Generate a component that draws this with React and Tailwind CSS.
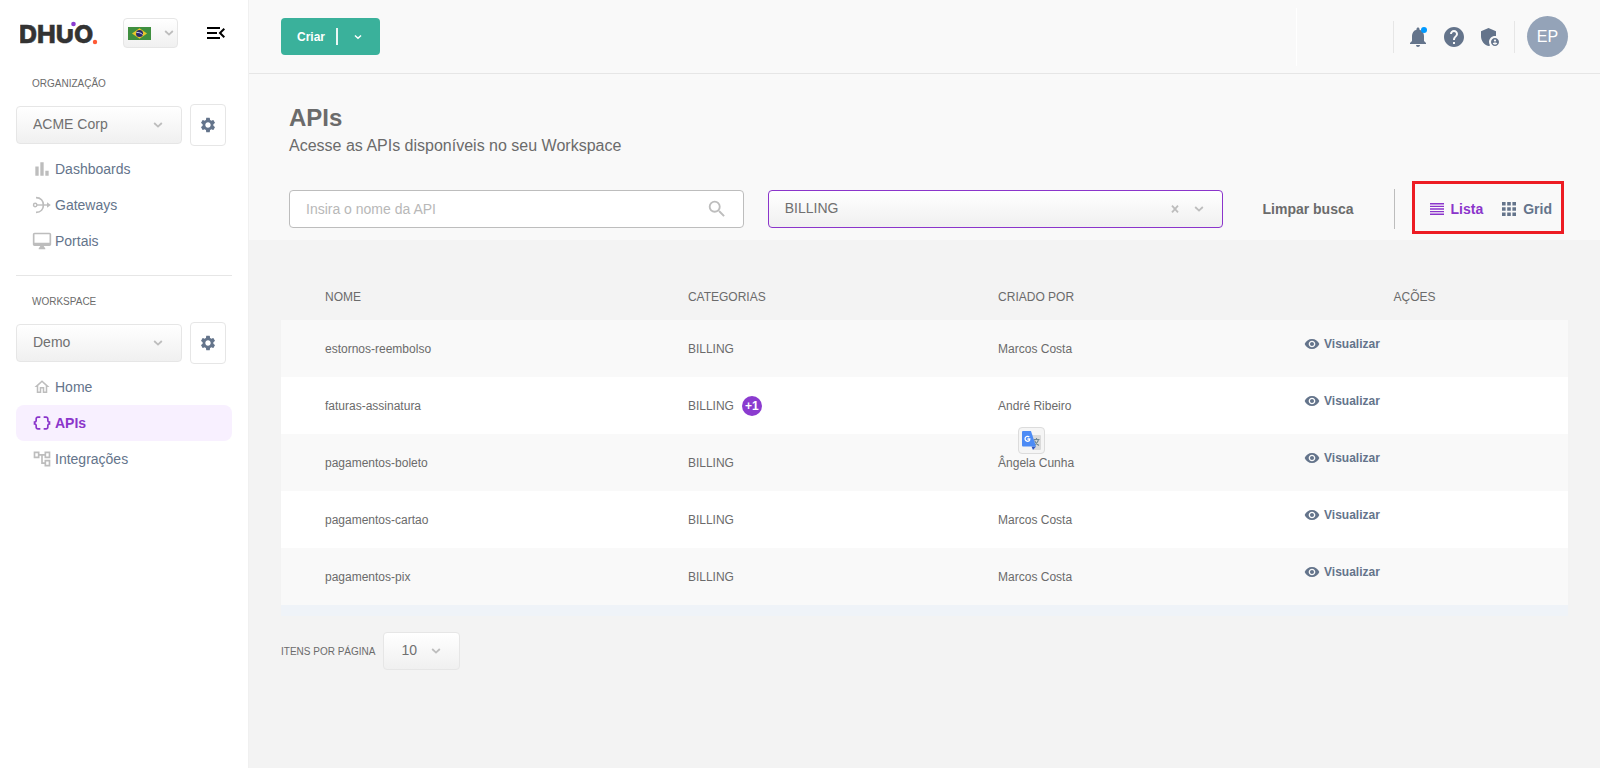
import React, { useState } from 'react';
import {
  MdAdminPanelSettings,
  MdHelp,
  MdMenuOpen,
  MdNotifications,
  MdSearch,
  MdSettings,
} from 'react-icons/md';

const apis = [
  { id: 1, name: 'estornos-reembolso', category: 'BILLING', extra: 0, owner: 'Marcos Costa' },
  { id: 2, name: 'faturas-assinatura', category: 'BILLING', extra: 1, owner: 'André Ribeiro' },
  { id: 3, name: 'pagamentos-boleto', category: 'BILLING', extra: 0, owner: 'Ângela Cunha' },
  { id: 4, name: 'pagamentos-cartao', category: 'BILLING', extra: 0, owner: 'Marcos Costa' },
  { id: 5, name: 'pagamentos-pix', category: 'BILLING', extra: 0, owner: 'Marcos Costa' },
];

const Icon = ({ d, className }) => (
  <svg className={className} viewBox="0 0 24 24" fill="currentColor" aria-hidden="true">
    <path d={d} />
  </svg>
);

const Chevron = ({ className }) => (
  <svg className={className} width="10" height="6" viewBox="0 0 10 6" fill="none" aria-hidden="true">
    <path d="M1.2 1l3.8 3.6L8.8 1" stroke="currentColor" strokeWidth="1.8" />
  </svg>
);

const paths = {
  chart: 'M4 9h4v11H4zM16 14h4v6h-4zM10 4h4v16h-4z',
  desktop:
    'M21 2H3c-1.1 0-2 .9-2 2v12c0 1.1.9 2 2 2h7l-2 3v1h8v-1l-2-3h7c1.1 0 2-.9 2-2V4c0-1.1-.9-2-2-2zm0 12H3V4h18v10z',
  home: 'M12 5.69l5 4.5V18h-2v-6H9v6H7v-7.81l5-4.5M12 3L2 12h3v8h6v-6h2v6h6v-8h3L12 3z',
  braces:
    'M4 7v2c0 .55-.45 1-1 1H2v4h1c.55 0 1 .45 1 1v2c0 1.65 1.35 3 3 3h3v-2H7c-.55 0-1-.45-1-1v-2c0-1.3-.84-2.42-2-2.83v-.34C5.16 11.42 6 10.3 6 9V7c0-.55.45-1 1-1h3V4H7C5.35 4 4 5.35 4 7zM21 10c-.55 0-1-.45-1-1V7c0-1.65-1.35-3-3-3h-3v2h3c.55 0 1 .45 1 1v2c0 1.3.84 2.42 2 2.83v.34c-1.16.41-2 1.52-2 2.83v2c0 .55-.45 1-1 1h-3v2h3c1.65 0 3-1.35 3-3v-2c0-.55.45-1 1-1h1v-4h-1z',
  tree: 'M22 11V3h-7v3H9V3H2v8h7V8h2v10h4v3h7v-8h-7v3h-2V8h2v3h7zM7 9H4V5h3v4zm10 6h3v4h-3v-4zm0-10h3v4h-3V5z',
  eye: 'M12 4.5C7 4.5 2.73 7.61 1 12c1.73 4.39 6 7.5 11 7.5s9.27-3.11 11-7.5c-1.73-4.39-6-7.5-11-7.5zm0 12.5c-2.76 0-5-2.24-5-5s2.24-5 5-5 5 2.24 5 5-2.24 5-5 5zm0-8c-1.66 0-3 1.34-3 3s1.34 3 3 3 3-1.34 3-3-1.34-3-3-3z',
};

const GatewayIcon = () => (
  <svg className="w-5 h-5" viewBox="0 0 20 20" fill="none" stroke="currentColor" aria-hidden="true">
    <circle cx="3.2" cy="10" r="1.7" strokeWidth="1.4" />
    <path d="M5 10h12" strokeWidth="1.4" />
    <path d="M4 2.600c4.800 0 7.400 3.300 7.400 7.400s-2.600 7.400-7.400 7.400" strokeWidth="1.7" />
    <path d="M15 7.200l3.800 2.800-3.800 2.800z" fill="currentColor" stroke="none" />
  </svg>
);

const Logo = () => (
  <svg width="80" height="34" viewBox="0 0 80 34" role="img" aria-label="DHUO">
    <text
      x="-1"
      y="27"
      fill="#333333"
      stroke="#333333"
      strokeWidth="0.5"
      fontFamily="Inter, sans-serif"
      fontWeight="800"
      fontSize="25"
    >
      DHUO
    </text>
    <rect x="47" y="5" width="8" height="8" fill="#ffffff" />
    <circle cx="53.500" cy="8" r="2.300" fill="#8b3bcf" />
    <circle cx="75" cy="26" r="2.200" fill="#ff5a36" />
  </svg>
);

const Flag = () => (
  <svg width="23" height="13" viewBox="0 0 23 13" aria-hidden="true">
    <rect width="23" height="13" fill="#3f8f3f" />
    <path d="M4 6.5L11.5 1.3 19 6.5l-7.5 5.2z" fill="#e8c62c" />
    <circle cx="11.5" cy="6.5" r="3.5" fill="#2b2a6b" />
    <path d="M8.4 5.6c2.2-.4 4.6.3 6.2 2" stroke="#c9d3e6" strokeWidth="1" fill="none" />
  </svg>
);

const ScopePicker = ({ id, label, value }) => (
  <div>
    <label htmlFor={id} className="block px-4 text-[10px] leading-4 text-[#6b6b6b] uppercase">
      {label}
    </label>
    <div className="mt-3 flex items-center gap-2">
      <div className="relative w-[166px]">
        <select
          id={id}
          className="w-full h-[38px] pl-4 pr-8 pb-0.5 appearance-none rounded border border-[#e6e6e6] bg-linear-to-b from-white to-[#f0f0f0] text-sm text-[#707070]"
        >
          <option>{value}</option>
        </select>
        <Chevron className="absolute right-[19px] top-4 text-[#bdbdbd] pointer-events-none" />
      </div>
      <button
        aria-label={`Configurar ${value}`}
        className="w-9 h-[42px] flex items-center justify-center rounded border border-[#e6e6e6] bg-white text-[#64748b]"
      >
        <MdSettings size={18} />
      </button>
    </div>
  </div>
);

const NavItem = ({ icon, label, active }) => (
  <li>
    <a
      href="#"
      className={
        active
          ? 'h-9 px-4 flex items-center gap-[3px] rounded-lg bg-[#f8f0ff] text-sm font-bold text-[#8b35cb]'
          : 'h-9 px-4 flex items-center gap-[3px] rounded-lg text-sm text-[#64748b]'
      }
    >
      <span className={active ? 'w-5 flex justify-center' : 'w-5 flex justify-center text-[#bdbdbd]'}>
        {icon}
      </span>
      {label}
    </a>
  </li>
);

const Sidebar = () => (
  <aside className="w-[248px] shrink-0 px-4 bg-white">
    <div className="h-[66px] pl-1 pr-1 flex items-center">
      <Logo />
      <button
        aria-label="Idioma: Português (Brasil)"
        className="ml-[23px] w-[55px] h-[30px] pl-1 pr-[3px] flex items-center justify-between rounded border border-[#e6e6e6] bg-linear-to-b from-white to-[#f0f0f0] text-[#bdbdbd]"
      >
        <Flag />
        <Chevron />
      </button>
      <button aria-label="Recolher menu" className="ml-auto text-black">
        <MdMenuOpen size={24} />
      </button>
    </div>

    <div className="pt-2.5">
      <ScopePicker id="organizacao" label="Organização" value="ACME Corp" />
    </div>
    <ul className="mt-[5px]">
      <NavItem icon={<Icon d={paths.chart} className="w-5 h-5" />} label="Dashboards" />
      <NavItem icon={<GatewayIcon />} label="Gateways" />
      <NavItem icon={<Icon d={paths.desktop} className="w-5 h-5" />} label="Portais" />
    </ul>

    <hr className="mt-4 mb-[18px] border-[#e6e6e6]" />

    <ScopePicker id="workspace" label="Workspace" value="Demo" />
    <ul className="mt-[5px]">
      <NavItem icon={<Icon d={paths.home} className="w-[18px] h-[18px]" />} label="Home" />
      <NavItem icon={<Icon d={paths.braces} className="w-5 h-5" />} label="APIs" active />
      <NavItem icon={<Icon d={paths.tree} className="w-5 h-5" />} label="Integrações" />
    </ul>
  </aside>
);

const Topbar = () => (
  <header className="h-[74px] px-8 flex items-center justify-between border-b border-[#e6e6e6] bg-[#f9f9f9]">
    <button className="h-[37px] px-4 flex items-center rounded bg-[#3ab19b] text-xs font-bold text-white">
      Criar
      <span className="ml-[11px] w-0.5 h-[17px] bg-white/90" />
      <Chevron className="ml-4 mr-0.5 w-2" />
    </button>

    <div className="flex items-center text-[#64748b]">
      <span className="w-px h-[58px] mr-24 bg-white" />
      <div className="h-8 px-3 flex items-center gap-3 border-x border-[#e6e6e6]">
        <button aria-label="Notificações" className="relative">
          <MdNotifications size={24} />
          <span className="absolute top-0.5 right-[3px] w-1.5 h-1.5 rounded-full bg-[#0099ff]" />
        </button>
        <button aria-label="Ajuda">
          <MdHelp size={24} />
        </button>
        <button aria-label="Administração">
          <MdAdminPanelSettings size={24} />
        </button>
      </div>
      <button className="ml-3 w-[41px] h-[41px] rounded-full bg-[#94a3b8] text-base text-white">EP</button>
    </div>
  </header>
);

const Filters = ({ view, setView }) => {
  const [search, setSearch] = useState('');
  const [category, setCategory] = useState('BILLING');

  const clear = () => {
    setSearch('');
    setCategory('');
  };

  return (
    <section className="h-[166px] pl-10 pr-12 pt-7 bg-[#f9f9f9]">
      <h1 className="text-2xl leading-8 font-bold text-[#6b6b6b]">APIs</h1>
      <p className="text-base leading-6 text-[#6b6b6b]">Acesse as APIs disponíveis no seu Workspace</p>

      <div className="mt-[31px] flex items-center">
        {/* Search */}
        <div className="relative flex-1">
          <input
            type="text"
            aria-label="Nome da API"
            placeholder="Insira o nome da API"
            value={search}
            onChange={(e) => setSearch(e.target.value)}
            className="w-full h-[38px] pl-4 pr-12 rounded border border-[#bdbdbd] bg-white text-sm text-[#707070] placeholder:text-[#b8b8b8]"
          />
          <MdSearch size={22} className="absolute right-4 top-2 text-[#bdbdbd]" />
        </div>

        {/* Category */}
        <div className="relative flex-1 ml-6">
          <select
            aria-label="Categoria"
            value={category}
            onChange={(e) => setCategory(e.target.value)}
            className="w-full h-[38px] pl-4 pr-16 pb-0.5 appearance-none rounded border border-[#8b35cb] bg-linear-to-b from-white to-[#f0f0f0] text-sm text-[#707070]"
          >
            <option value="">Todas</option>
            <option value="BILLING">BILLING</option>
          </select>
          <button
            aria-label="Limpar categoria"
            onClick={() => setCategory('')}
            className="absolute right-11 top-[15px] text-[#bdbdbd]"
          >
            <svg width="8" height="8" viewBox="0 0 8 8" fill="none" stroke="currentColor" strokeWidth="1.8">
              <path d="M1 .6l6 6.8M7 .6L1 7.4" />
            </svg>
          </button>
          <Chevron className="absolute right-[19px] top-4 text-[#bdbdbd] pointer-events-none" />
        </div>

        <button onClick={clear} className="ml-10 text-sm font-bold text-[#6b6b6b]">
          Limpar busca
        </button>

        {/* View switch */}
        <div className="ml-10 h-10 pl-[35px] relative flex items-center border-l border-[#bdbdbd] text-sm font-bold">
          <button
            onClick={() => setView('lista')}
            className={view === 'lista' ? 'flex items-center gap-[7px] text-[#8b35cb]' : 'flex items-center gap-[7px] text-[#64748b]'}
          >
            <svg width="14" height="12" viewBox="0 0 14 12" fill="currentColor" aria-hidden="true">
              <path d="M0 0h14v1.400H0zM0 2.650h14v1.400H0zM0 5.300h14v1.400H0zM0 7.950h14v1.400H0zM0 10.600h14v1.400H0z" />
            </svg>
            Lista
          </button>
          <button
            onClick={() => setView('grid')}
            className={view === 'grid' ? 'ml-[19px] flex items-center gap-[7px] text-[#8b35cb]' : 'ml-[19px] flex items-center gap-[7px] text-[#64748b]'}
          >
            <svg width="14" height="14" viewBox="0 0 14 14" fill="currentColor" aria-hidden="true">
              <path d="M0 0h3.600v3.600H0zM5.200 0h3.600v3.600H5.200zM10.400 0H14v3.600h-3.600zM0 5.200h3.600v3.600H0zM5.200 5.200h3.600v3.600H5.200zM10.400 5.200H14v3.600h-3.600zM0 10.400h3.600V14H0zM5.200 10.400h3.600V14H5.200zM10.400 10.400H14V14h-3.600z" />
            </svg>
            Grid
          </button>
          <span className="absolute left-[17px] -right-3 -top-2 -bottom-[5px] border-3 border-[#ed1c24] pointer-events-none" />
        </div>
      </div>
    </section>
  );
};

const TranslateBadge = () => (
  <span className="absolute left-16 -top-[7px] w-[27px] h-[27px] flex items-center justify-center rounded border border-[#dcdcdc] bg-[#f5f5f5]">
    <svg width="19" height="19" viewBox="0 0 19 19" aria-hidden="true">
      <path d="M7 4h11a1 1 0 011 1v13a1 1 0 01-1 1h-6z" fill="#dadada" />
      <path
        d="M11.5 8.500h6M14.500 7v1.500M16.500 8.500c-.6 2.600-2 4.500-4.500 6M12.500 9.500c.8 2.200 2.200 3.800 4.500 5"
        stroke="#6f8791"
        strokeWidth="1.1"
        fill="none"
      />
      <path d="M9.500 15.500H14L11 19z" fill="#2f56c0" />
      <path d="M1 0h8l5 15.500H1a1 1 0 01-1-1V1a1 1 0 011-1z" fill="#4c8bf5" />
      <path d="M7.300 6A2.500 2.500 0 105.500 10.300c1.500 0 2.300-1 2.300-2.300H5.400" stroke="#ffffff" strokeWidth="1.300" fill="none" />
    </svg>
  </span>
);

const ApiTable = () => (
  <div className="border-b-[11px] border-[#eff3f8]">
    <table className="w-full table-fixed text-xs text-[#6b6b6b]">
      <thead>
        <tr className="h-12 text-left uppercase">
          <th className="w-[28.2%] pl-11 pt-0.5 font-normal">Nome</th>
          <th className="w-[24.1%] pl-11 pt-0.5 font-normal">Categorias</th>
          <th className="pl-11 pt-0.5 font-normal">Criado por</th>
          <th className="pt-0.5 text-center font-normal">Ações</th>
        </tr>
      </thead>
      <tbody>
        {apis.map((api) => (
          <tr key={api.id} className="h-[57px] odd:bg-[#f9f9f9] even:bg-white">
            <td className="pl-11">{api.name}</td>
            <td className="pl-11">
              <div className="flex items-center gap-2">
                {api.category}
                {api.extra > 0 && (
                  <span className="w-5 h-5 flex items-center justify-center rounded-full bg-[#8b3bcf] text-xs font-bold text-white">
                    +{api.extra}
                  </span>
                )}
              </div>
            </td>
            <td className="relative pl-11">
              {api.owner}
              {api.id === 3 && <TranslateBadge />}
            </td>
            <td className="pl-[43px] pb-2.5">
              <button className="flex items-center gap-1 font-bold text-[#64748b]">
                <Icon d={paths.eye} className="w-4 h-4" />
                Visualizar
              </button>
            </td>
          </tr>
        ))}
      </tbody>
    </table>
  </div>
);

const Pagination = () => (
  <div className="mt-4 flex items-center gap-2">
    <label htmlFor="itens" className="text-[10px] text-[#6b6b6b] uppercase">
      Itens por página
    </label>
    <div className="relative w-[77px]">
      <select
        id="itens"
        className="w-full h-[38px] pl-[17px] pb-0.5 appearance-none rounded border border-[#e6e6e6] bg-linear-to-b from-white to-[#f0f0f0] text-sm text-[#707070]"
      >
        <option>10</option>
        <option>20</option>
        <option>50</option>
      </select>
      <Chevron className="absolute right-[19px] top-4 text-[#bdbdbd] pointer-events-none" />
    </div>
  </div>
);

const App = () => {
  const [view, setView] = useState('lista');

  return (
    <div className="min-h-screen pb-[3px] flex bg-white font-['Liberation_Sans',Arial,sans-serif]">
      <Sidebar />
      <div className="flex-1 min-w-0 border-l border-[#f0f0f0] bg-[#f3f3f3]">
        <Topbar />
        <Filters view={view} setView={setView} />
        <main className="px-8 pt-8">
          <ApiTable />
          <Pagination />
        </main>
      </div>
    </div>
  );
};

export default App;
